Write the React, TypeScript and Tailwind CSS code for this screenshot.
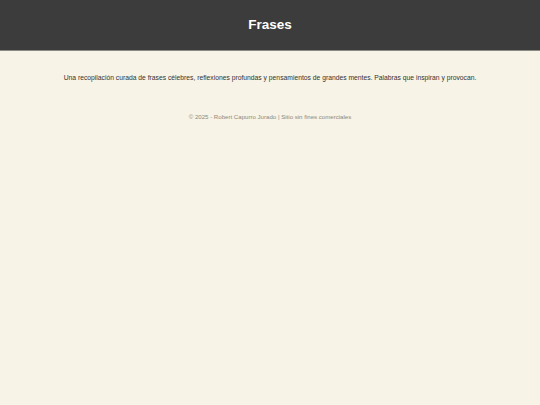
import React from "react";

const App = () => {
  return (
    <div className="min-h-[405px] bg-[#f7f3e6] font-['Liberation_Sans',Arial,sans-serif]">
      <header className="h-[51px] bg-[#3c3c3c] border-b border-[#8a8a86] flex items-center justify-center">
        <h1 className="text-[13.5px] font-bold text-white">Frases</h1>
      </header>
      <main className="flex flex-col items-center px-4">
        <p className="mt-[22px] text-[6.75px] text-[#333333] text-center">
          Una recopilación curada de frases célebres, reflexiones profundas y pensamientos de grandes mentes. Palabras que inspiran y provocan.
        </p>
        <footer className="mt-[29px] text-[6.1px] text-[#8a8a80] text-center">
          © 2025 - Robert Capurro Jurado | Sitio sin fines comerciales
        </footer>
      </main>
    </div>
  );
};

export default App;
